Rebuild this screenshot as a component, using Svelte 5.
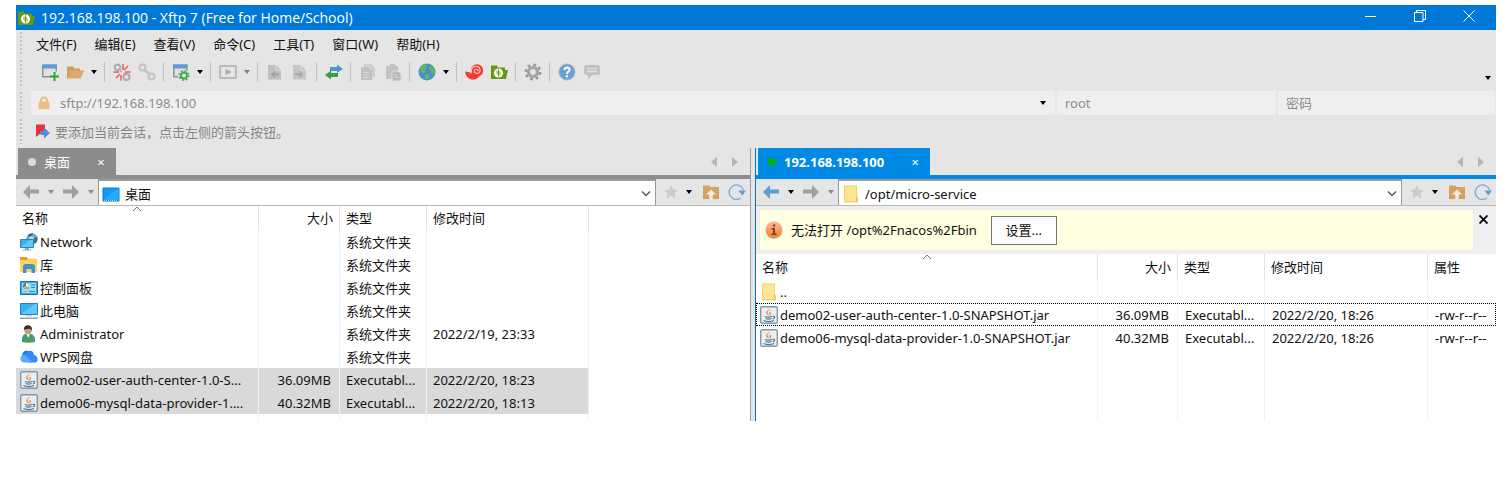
<script>
  const menus = ['文件(F)', '编辑(E)', '查看(V)', '命令(C)', '工具(T)', '窗口(W)', '帮助(H)'];

  const tools = [
    ['new', '新建会话'], ['open', '打开'], ['caret'], ['sep'],
    ['cut', '断开'], ['link', '重新连接'], ['sep'],
    ['props', '属性'], ['caret'], ['sep'],
    ['play', '运行'], ['caretOff'], ['sep'],
    ['pageLeft', '下载'], ['pageRight', '上传'], ['sep'],
    ['swap', '同步'], ['sep'],
    ['copy', '复制'], ['paste', '粘贴'], ['sep'],
    ['globe', '语言'], ['caret'], ['sep'],
    ['shell', 'Xshell'], ['xftp', 'Xftp'], ['sep'],
    ['gear', '选项'], ['sep'],
    ['help', '帮助'], ['chat', '反馈']
  ];

  const localRows = [
    { icon: 'network', name: 'Network', size: '', type: '系统文件夹', date: '' },
    { icon: 'library', name: '库', size: '', type: '系统文件夹', date: '' },
    { icon: 'control', name: '控制面板', size: '', type: '系统文件夹', date: '' },
    { icon: 'pc', name: '此电脑', size: '', type: '系统文件夹', date: '' },
    { icon: 'user', name: 'Administrator', size: '', type: '系统文件夹', date: '2022/2/19, 23:33' },
    { icon: 'cloud', name: 'WPS网盘', size: '', type: '系统文件夹', date: '' },
    { icon: 'jar', name: 'demo02-user-auth-center-1.0-S...', size: '36.09MB', type: 'Executabl...', date: '2022/2/20, 18:23', selected: true },
    { icon: 'jar', name: 'demo06-mysql-data-provider-1....', size: '40.32MB', type: 'Executabl...', date: '2022/2/20, 18:13', selected: true }
  ];

  const remoteRows = [
    { icon: 'folder', name: '..', size: '', type: '', date: '', attr: '' },
    { icon: 'jar', name: 'demo02-user-auth-center-1.0-SNAPSHOT.jar', size: '36.09MB', type: 'Executabl...', date: '2022/2/20, 18:26', attr: '-rw-r--r--', focused: true },
    { icon: 'jar', name: 'demo06-mysql-data-provider-1.0-SNAPSHOT.jar', size: '40.32MB', type: 'Executabl...', date: '2022/2/20, 18:26', attr: '-rw-r--r--' }
  ];
</script>

{#snippet caret(color)}
  <svg class="caret" width="6" height="4" viewBox="0 0 6 4" aria-hidden="true"><path d="M0 0h6L3 4z" fill={color} /></svg>
{/snippet}

{#snippet icon(name)}
  <svg class="icon" width="18" height="18" viewBox="0 0 18 18" fill="none" aria-hidden="true">
    {#if name === 'new'}
      <path d="M1.800 2.300h13.400v11.500H1.800z" fill="#e0e0e0" stroke="#929292" stroke-width="1.500" />
      <path d="M1 1.500h15v4H1z" fill="#5c9bd5" />
      <path d="M9 8.500h9V18H9z" fill="#e5e5e5" />
      <path d="M13.500 9v9M9 13.500h9" stroke="#27a627" stroke-width="2" />
    {:else if name === 'open'}
      <path d="M1 3.500h6l1.500 2H14V9H5l-3 6.500H1z" fill="#cda062" />
      <path d="M4.500 7.500H18L14.500 15.500H1.500z" fill="#dcaa69" />
    {:else if name === 'cut'}
      <circle cx="4.500" cy="4.200" r="2.800" stroke="#adadad" stroke-width="2" />
      <circle cx="13.500" cy="14" r="3" stroke="#adadad" stroke-width="2" />
      <path d="M6.500 6.500l2 2.500M10.500 10l1.500 2" stroke="#adadad" stroke-width="1.800" />
      <path d="M10 7V1M11 7l4-4M12 9h5.500M6 9H.5M7 11l-4 4M8 12v5.500" stroke="#ee5555" stroke-width="1.400" />
    {:else if name === 'link'}
      <circle cx="4.500" cy="4.500" r="3" stroke="#c3c3c3" stroke-width="2" />
      <circle cx="13.500" cy="13.500" r="3" stroke="#c3c3c3" stroke-width="2" />
      <path d="M6 6.500l6 5" stroke="#c3c3c3" stroke-width="2.600" />
    {:else if name === 'props'}
      <path d="M1.800 2.300h12.900v11.500H1.800z" fill="#e0e0e0" stroke="#929292" stroke-width="1.500" />
      <path d="M1 1.500h14.500v4H1z" fill="#5c9bd5" />
      <circle cx="12" cy="12.500" r="5.800" fill="#e5e5e5" />
      <circle cx="12" cy="12.500" r="4.500" stroke="#43ab43" stroke-width="2" stroke-dasharray="1.700 1.834" />
      <circle cx="12" cy="12.500" r="3" stroke="#43ab43" stroke-width="1.800" />
    {:else if name === 'play'}
      <rect x="1" y="3" width="16" height="12" rx="1" stroke="#b0b0b0" stroke-width="1.600" />
      <path d="M6.500 6l6 3-6 3z" fill="#acacac" />
    {:else if name === 'pageLeft'}
      <path d="M2 2h8l5 5v9.500H2z" fill="#c0c0c0" />
      <path d="M10 2v5h5" stroke="#dcdcdc" />
      <path d="M13 10H9V7.500L4.500 11.500 9 15v-2.500h4z" fill="#a6a6a6" />
    {:else if name === 'pageRight'}
      <path d="M2 2h8l5 5v9.500H2z" fill="#c6c6c6" />
      <path d="M10 2v5h5" stroke="#dcdcdc" />
      <path d="M4 10h4V7.500l4.500 4L8 15v-2.500H4z" fill="#a9a9a9" />
    {:else if name === 'swap'}
      <path d="M5 4h7V1.500l6 4.500-6 4V8H5z" fill="#5193d3" />
      <path d="M13 10H6V7.500L0 12l6 4.500V14h7z" fill="#39a03f" />
    {:else if name === 'copy'}
      <path d="M5 1h7l4 4v9H5z" fill="#cfcfcf" />
      <path d="M2 4h7l4 4v9H2z" fill="#c1c1c1" />
      <path d="M4 9.500h6M4 12h6M4 14.500h6" stroke="#d8d8d8" />
    {:else if name === 'paste'}
      <path d="M2 3h4V1h5v2h3v13H2z" fill="#c3c3c3" />
      <path d="M8 8h6l3 3v7H8z" fill="#bababa" stroke="#dedede" />
      <path d="M10 11.500h3M10 14h5" stroke="#d8d8d8" />
    {:else if name === 'globe'}
      <circle cx="9" cy="9" r="8.500" fill="#4e8fca" />
      <path d="M1.500 5.500C3 3 5.500 1.500 8 1.500L9 4 7 6v3l-2 2-1.500-2zM11.500 3l3 .5 2.500 4-.5 4-2.500-.500-1-3-2-2zM7 12l3-1 1.500 2-2 3.500L7.500 16z" fill="#58bb5e" />
    {:else if name === 'shell'}
      <path d="M0 8.500l5 .8c1 2 4 2.500 6 1l3.500 3.200c-5 5.500-13.500 3.500-14.500-5z" fill="#ee3e37" />
      <circle cx="12" cy="7.500" r="6.200" fill="#ee3e37" />
      <path d="M6.500 9.500c-1-4.500 2.500-7 6-6 3.500 1 3.500 6.500-.5 7-3.500 0-3.500-4.500-.5-4.500 1.500 0 2 1.500 1 2.200" stroke="#f8c5c1" stroke-width="1.100" />
    {:else if name === 'xftp'}
      <path d="M1 2.500h6l1 2h7V7h3l-2 9H1z" fill="#649a10" />
      <circle cx="8.500" cy="10" r="4.600" fill="#fff" />
      <path d="M7 7.500v3.200a1 1 0 0 0 1.500 0V6M10 12.500V9.300a1 1 0 0 0-1.500 0V14" stroke="#649a10" stroke-width=".9" />
    {:else if name === 'gear'}
      <circle cx="9" cy="9" r="7.200" stroke="#969696" stroke-width="2.400" stroke-dasharray="2.800 2.855" />
      <circle cx="9" cy="9" r="4.500" stroke="#a3a3a3" stroke-width="3.200" />
    {:else if name === 'help'}
      <circle cx="9" cy="9" r="8" fill="#69a0d6" stroke="#a3b6c9" />
      <path d="M6.500 7c0-3.500 5.200-3.200 5.200-.4C11.700 8.700 9 8.500 9 11" stroke="#fff" stroke-width="1.900" />
      <circle cx="9" cy="13.300" r="1.200" fill="#fff" />
    {:else if name === 'chat'}
      <path d="M3 2h12a2 2 0 0 1 2 2v6a2 2 0 0 1-2 2H9l-4 4.500V12H3a2 2 0 0 1-2-2V4a2 2 0 0 1 2-2z" fill="#c2c2c2" />
      <path d="M4 5.500h10M4 8.500h10" stroke="#dedede" stroke-width="1.300" />
    {:else if name === 'lock'}
      <path d="M6 9V6.500a3 3 0 0 1 6 0V9" stroke="#e8bf87" stroke-width="2" />
      <rect x="3.500" y="7.500" width="11" height="7.500" rx="1" fill="#eabf86" />
    {:else if name === 'flag'}
      <path d="M2 1.500h9V9l-4.500 1.500L2 14z" fill="#e03540" />
      <path d="M6.500 8H10V4.500l6 5.500-6 5.500V12H6.500z" fill="#4b8fd0" />
    {:else if name === 'back' || name === 'forward'}
      <path d={name === 'back' ? 'M1 9l7-7v4.500h9v4H8V16z' : 'M17 9l-7-7v4.500H1v4h9V16z'} fill="currentColor" />
    {:else if name === 'star'}
      <path d="M9 2l2.100 4.700 5 .5-3.800 3.300 1.200 5L9 12.800 4.500 15.500l1.200-5L2 7.200l5-.5z" fill="#cbcbcb" />
    {:else if name === 'up'}
      <path d="M1 2.500h6l2 1.500h8v12H1z" fill="#d4a263" />
      <path d="M9 6.500l5 5h-3.200V16H7.200v-4.500H4z" fill="#f2ece4" />
    {:else if name === 'refresh'}
      <path d="M13 15A7.300 7.300 0 1 1 15.500 7" stroke="#7aafdf" stroke-width="1.400" />
      <path d="M10.500 7.500H18l-3.700 5z" fill="#5c9fdb" />
    {:else if name === 'desktop'}
      <path d="M1 3h16v13H1z" fill="#159bf7" stroke="#087bcb" />
      <path d="M1.500 15L15 3.500h1.500V15z" fill="#27a9ff" />
      <path d="M2 15.500h14" stroke="#8cd3ff" stroke-dasharray="1 1" />
    {:else if name === 'folder'}
      <path d="M2 .5h13v11l1 1v5H2z" fill="#f3d26a" />
      <path d="M3 1.500h11V16H3z" fill="#fee596" />
      <path d="M14.500 12v5" stroke="#e9c352" />
    {:else if name === 'network'}
      <circle cx="12" cy="6" r="5.800" fill="#6fa6c4" />
      <path d="M8 2c1-1 3-2 5-1.500L12 3 9 4zM14 5l3-1c1 2 0 5-2 6.500L13.500 8z" fill="#336f93" />
      <path d="M9 4l3-1 2 2-.5 2H9z" fill="#b5dbe9" />
      <path d="M.5 6.500h13v8H.5z" fill="#3bb0f0" stroke="#2a83bd" />
      <path d="M1 14l9-7h3v7z" fill="#63c6f9" />
      <path d="M5 15h4v1.500h2v1H3v-1h2z" fill="#8ba7b8" />
    {:else if name === 'library'}
      <path d="M0 1h7l1 2h9v3H0z" fill="#dfa21a" />
      <path d="M0 4h7l1-1.500h9V16H0z" fill="#ffd25c" />
      <path d="M3 17V9.500l2-1.500h8l2 1.500V17h-3.500v-4h-5v4z" fill="#3f93d3" />
    {:else if name === 'control'}
      <path d="M.5 2.500h17v13H.5z" fill="#35a5e6" stroke="#1b78ae" />
      <path d="M2 4h14v10H2z" fill="#9cdaf8" />
      <circle cx="6" cy="7" r="3" fill="#2e82bd" />
      <path d="M6 7V4a3 3 0 0 1 2.500 4.500z" fill="#fff" />
      <path d="M6 7l2.500 1.500A3 3 0 0 1 3.200 8z" fill="#f2b52e" />
      <path d="M11 6h4M11 8.500h4M9 12.500h6" stroke="#2589c5" />
      <path d="M3 12.500h4" stroke="#f2a53a" />
    {:else if name === 'pc'}
      <path d="M.5 1.500h17v11H.5z" fill="#35b1f5" stroke="#2a81b4" />
      <path d="M1 12L15 2h2v10z" fill="#62c7fb" />
      <path d="M6 13h6v1.500H6z" fill="#c5d2da" />
      <path d="M0 15.500h18v1.500H0z" fill="#8ea4b1" />
    {:else if name === 'user'}
      <path d="M2 17c-.5-5 1-8.500 5-8.500h3c4 1 5.500 4 5 8.500-4 1-9 1-13 0z" fill="#4d9b73" />
      <path d="M6 8.500h4L8.500 13z" fill="#f3f4ee" />
      <circle cx="8" cy="5.500" r="3.600" fill="#c89b78" />
      <path d="M4 5C3.500 1 6.500 0 8.500.3c3 .3 4 3 3.200 5.700L10.500 3.800 6 4z" fill="#393027" />
    {:else if name === 'cloud'}
      <path d="M2 8C2 4 5 2 8 3l8 8-4 3.500H8z" fill="#1672ee" />
      <path d="M8 3c4-1 6 1.500 6 4 4 .5 5 6 1.500 7.500H13L5 6z" fill="#3488f8" />
      <path d="M5 6.500L13 14.500H4A4 4 0 0 1 2.500 7z" fill="#5aaaff" />
    {:else if name === 'jar'}
      <rect x=".7" y=".7" width="16.600" height="16.600" rx="1.500" fill="#e9eef2" stroke="#8299a9" stroke-width="1.400" />
      <path d="M9.500 2c1 2-3 3-2 5 .5 1 1.500 1 1 2.500C6 7.500 5.500 6.500 7 5s2.500-1.500 2.500-3zM12 4.500c-2 1-3 1.500-2.500 3 .5 1 .5 1.500-.5 2.500 3-1.500 2-2.500 1.500-3.500s.5-1.500 1.500-2z" fill="#e87a2a" />
      <path d="M5 10.500c2 .8 5 .8 7 0M5.500 12.500c2 .8 4 .8 6 0M3.500 14.500c3 1.500 8 1.300 10.500 0M12.500 10.500c3-.8 2.500 2 .3 2.500" stroke="#4f7590" stroke-width="1.200" />
    {/if}
  </svg>
{/snippet}

{#snippet pathBar(connected, iconName, path)}
  <div class="pathbar">
    <div class="nav">
      <button class="navbtn" class:on={connected} aria-label="后退">{@render icon('back')}</button>
      <button class="drop" aria-label="后退历史">{@render caret(connected ? '#000' : '#8c8c8c')}</button>
      <button class="navbtn" aria-label="前进">{@render icon('forward')}</button>
      <button class="drop" aria-label="前进历史">{@render caret('#8c8c8c')}</button>
    </div>
    <div class="location">
      {@render icon(iconName)}
      <select aria-label="路径"><option>{path}</option></select>
      <svg class="chevron" width="10" height="6" viewBox="0 0 10 6" fill="none" aria-hidden="true"><path d="M1 .5l4 4 4-4" stroke="#555" stroke-width="1.300" /></svg>
    </div>
    <div class="actions">
      <button class="act" aria-label="收藏">{@render icon('star')}</button>
      <button class="drop" aria-label="收藏列表">{@render caret('#000')}</button>
      <button class="act" aria-label="上级目录">{@render icon('up')}</button>
      <button class="act" aria-label="刷新">{@render icon('refresh')}</button>
    </div>
  </div>
{/snippet}

{#snippet scrollers()}
  <div class="scrollers">
    <button aria-label="向左滚动"><svg width="6" height="10" viewBox="0 0 6 10"><path d="M6 0v10L0 5z" fill="#b5b5b5" /></svg></button>
    <button aria-label="向右滚动"><svg width="6" height="10" viewBox="0 0 6 10"><path d="M0 0v10l6-5z" fill="#b5b5b5" /></svg></button>
  </div>
{/snippet}

{#snippet fileTable(rows, remote)}
  <table class:remote>
    <colgroup>
      <col class="c-name" /><col class="c-size" /><col class="c-type" /><col class="c-date" /><col />
    </colgroup>
    <thead>
      <tr>
        <th class="sorted">名称<svg width="10" height="6" viewBox="0 0 10 6" fill="none" aria-hidden="true"><path d="M1 5l4-4 4 4" stroke="#777" /></svg></th>
        <th class="num">大小</th>
        <th>类型</th>
        <th>修改时间</th>
        {#if remote}<th class="last">属性</th>{:else}<td class="last"></td>{/if}
      </tr>
    </thead>
    <tbody>
      {#each rows as row}
        <tr class:selected={row.selected} class:focused={row.focused}>
          <td class="name"><div>{@render icon(row.icon)}<span>{row.name}</span></div></td>
          <td class="num">{row.size}</td>
          <td>{row.type}</td>
          <td>{row.date}</td>
          <td class="last">{row.attr ?? ''}</td>
        </tr>
      {/each}
      <tr class="filler"><td></td><td></td><td></td><td></td><td class="last"></td></tr>
    </tbody>
  </table>
{/snippet}

<main>
  <header class="titlebar">
    {@render icon('xftp')}
    <h1>192.168.198.100 - Xftp 7 (Free for Home/School)</h1>
    <div class="controls">
      <button aria-label="最小化"><svg width="12" height="12" viewBox="0 0 12 12" stroke="#fff"><path d="M0 6.500h11" /></svg></button>
      <button aria-label="还原"><svg width="12" height="12" viewBox="0 0 12 12" stroke="#fff" fill="none"><path d="M.5 2.500h8.500v9H.5zM2.500 2.500v-2h9v9H9" /></svg></button>
      <button aria-label="关闭"><svg width="12" height="12" viewBox="0 0 12 12" stroke="#fff"><path d="M.5 .5l11 11M11.500 .5l-11 11" /></svg></button>
    </div>
  </header>

  <nav class="bar menubar">
    <i class="grip"></i>
    {#each menus as m}<button>{m}</button>{/each}
  </nav>

  <div class="bar toolbar">
    <i class="grip"></i>
    {#each tools as [kind, label]}
      {#if kind === 'sep'}
        <span class="sep"></span>
      {:else if kind === 'caret' || kind === 'caretOff'}
        <button class="tdrop" aria-label="更多">{@render caret(kind === 'caret' ? '#000' : '#808080')}</button>
      {:else}
        <button class="tool" aria-label={label}>{@render icon(kind)}</button>
      {/if}
    {/each}
    <button class="overflow" aria-label="工具栏选项">{@render caret('#000')}</button>
  </div>

  <div class="bar address">
    <i class="grip"></i>
    <div class="fields">
      <div class="field host">
        {@render icon('lock')}
        <input type="text" aria-label="主机地址" value="sftp://192.168.198.100" />
        <button class="drop" aria-label="地址历史">{@render caret('#000')}</button>
      </div>
      <input class="field" type="text" aria-label="用户名" value="root" />
      <input class="field" type="password" aria-label="密码" placeholder="密码" />
    </div>
  </div>

  <div class="bar hint">
    <i class="grip"></i>
    {@render icon('flag')}
    <span>要添加当前会话，点击左侧的箭头按钮。</span>
  </div>

  <div class="panes">
    <section class="pane local">
      <div class="tabs">
        <div class="tab"><i class="dot"></i><span>桌面</span><button aria-label="关闭标签">×</button></div>
        {@render scrollers()}
      </div>
      {@render pathBar(false, 'desktop', '桌面')}
      <div class="list">{@render fileTable(localRows, false)}</div>
    </section>

    <section class="pane host-pane">
      <div class="tabs">
        <div class="tab"><i class="dot"></i><span>192.168.198.100</span><button aria-label="关闭标签">×</button></div>
        {@render scrollers()}
      </div>
      {@render pathBar(true, 'folder', '/opt/micro-service')}
      <div class="notice">
        <div class="message">
          <svg width="18" height="18" viewBox="0 0 18 18" aria-hidden="true">
            <defs><linearGradient id="warn" x1="0" y1="0" x2="0" y2="1"><stop offset="0" stop-color="#fbb9a4" /><stop offset="1" stop-color="#ec8526" /></linearGradient></defs>
            <circle cx="9" cy="9.500" r="8.500" fill="#c9b9a0" />
            <circle cx="9" cy="8.700" r="8.300" fill="url(#warn)" />
            <path d="M6.500 7H10v5.500h1.500V14h-5v-1.500H8V8.500H6.500zM8 3.500h2.300v2H8z" fill="#8a3f1d" />
          </svg>
          <span>无法打开 /opt%2Fnacos%2Fbin</span>
          <button>设置...</button>
        </div>
        <button class="dismiss" aria-label="关闭提示"><svg width="9" height="9" viewBox="0 0 9 9" stroke="#000" stroke-width="1.800"><path d="M.5 .5l8 8M8.500 .5l-8 8" /></svg></button>
      </div>
      <div class="list">{@render fileTable(remoteRows, true)}</div>
    </section>
  </div>
</main>

<style>
  :global(body) { background: #fff; }
  main {
    margin: 5px 14px 0 16px;
    background: #e5e5e5;
    color: #111;
    font: 13px/20px "Noto Sans", "Noto Sans CJK SC", sans-serif;
  }
  main *, main *::before { box-sizing: border-box; }
  button, input, select {
    margin: 0;
    padding: 0;
    border: 0;
    border-radius: 0;
    background: none;
    color: inherit;
    font: inherit;
    outline: none;
  }
  svg { display: block; flex: none; }
  button { display: flex; align-items: center; justify-content: center; flex: none; }

  .titlebar { display: flex; align-items: center; height: 25px; padding: 0 3px 0 1px; background: #0078d7; color: #fff; }
  h1 { flex: 1; margin: 0 0 0 6px; font: 400 14px/20px "Open Sans", sans-serif; white-space: nowrap; overflow: hidden; }
  .controls { display: flex; height: 100%; }
  .controls button { width: 49px; height: 22px; }

  .bar { display: flex; align-items: center; }
  .grip {
    align-self: stretch;
    flex: none;
    width: 2px;
    margin: 2px 0 2px 4px;
    background: repeating-linear-gradient(#bdbdbd 0 2px, #f0f0f0 2px 3px, transparent 3px 4px);
  }
  .menubar { height: 28px; gap: 18px; }
  .menubar .grip { margin-right: -4px; }
  .toolbar { height: 32px; padding-bottom: 4px; }
  .toolbar .grip { margin: 2px 15px -2px 4px; }
  .tool { width: 25px; height: 25px; }
  .tdrop { width: 13px; height: 25px; }
  .sep { flex: none; width: 9px; height: 20px; background: linear-gradient(90deg, transparent 4px, #c2c2c2 4px 5px, transparent 5px); }
  .overflow { margin: 12px 5px 0 auto; }

  .address { height: 25px; padding-right: 1px; color: #8c8c8c; }
  .address .grip { margin-right: 9px; }
  .fields { display: grid; grid-template-columns: 1024fr 219fr 217fr; gap: 2px; flex: 1; }
  .field { min-width: 0; height: 24px; padding: 0 8px; background: #efefef; }
  .field::placeholder { color: #8c8c8c; opacity: 1; }
  .host { display: flex; align-items: center; padding: 0 4px; }
  .host input { flex: 1; min-width: 0; margin-left: 7px; }
  .drop { width: 16px; height: 20px; }

  .hint { height: 33px; color: #858585; }
  .hint .grip { margin: 4px 12px 4px 4px; }
  .hint span { margin-left: 3px; }

  .panes { display: grid; grid-template-columns: 735fr 741fr; column-gap: 4px; }
  .pane { display: flex; flex-direction: column; min-width: 0; --accent: #8c8c8c; }
  .local { border-right: 1px solid #a0a0a0; }
  .host-pane { --accent: #008ae6; border-left: 1px solid #0078b8; }
  .tabs { display: flex; justify-content: space-between; height: 31px; padding: 0 8px 0 2px; border-bottom: 4px solid var(--accent); }
  .tab { display: flex; align-items: center; height: 28px; padding: 0 10px; background: var(--accent); color: #fff; }
  .tab .dot { width: 8px; height: 8px; margin-right: 8px; border-radius: 50%; background: #dcdcdc; }
  .tab span { min-width: 26px; }
  .tab button { width: 10px; margin-left: 26px; line-height: 18px; }
  .host-pane .tab span { font-weight: 700; }
  .host-pane .tab .dot { background: #00b40a; }
  .scrollers { display: flex; gap: 7px; }
  .scrollers button { width: 14px; height: 27px; }

  .pathbar { display: flex; height: 27px; border-bottom: 1px solid #b8b8b8; }
  .nav { display: flex; align-items: center; width: 82px; padding-left: 5px; }
  .navbtn { width: 20px; color: #a0a0a0; }
  .navbtn.on { color: #5c9fd8; }
  .nav .drop { width: 20px; }
  .location {
    display: flex;
    align-items: center;
    flex: 1;
    min-width: 0;
    padding: 2px 4px 0 3px;
    border: 1px solid #9c9c9c;
    border-top-width: 2px;
    border-bottom: 0;
    background: #fff;
  }
  .location select { flex: 1; min-width: 0; height: 22px; margin-left: 5px; appearance: none; }
  .actions { display: flex; align-items: center; width: 94px; padding-left: 5px; }
  .act { width: 20px; }
  .drop + .act { margin-left: 4px; }
  .act + .act { margin-left: 6px; }

  .notice { display: flex; align-items: flex-start; height: 48px; padding: 4px 8px 4px 4px; background: #efefef; }
  .message { display: flex; align-items: center; flex: 1; height: 40px; padding-left: 5px; background: #ffffe1; white-space: nowrap; }
  .message span { margin: 0 14px 0 8px; }
  .message button { width: 66px; height: 29px; border: 1px solid #777; background: #fdfdfd; }
  .dismiss { width: 20px; height: 18px; margin-right: -5px; }

  .list { flex: 1; min-height: 0; background: #fff; overflow: hidden; }
  table { width: 100%; table-layout: fixed; border-collapse: separate; border-spacing: 0; }
  .c-name { width: 243px; }
  .c-size { width: 81px; }
  .c-type { width: 87px; }
  .c-date { width: 162px; }
  .remote .c-name { width: 342px; }
  .remote .c-size { width: 80px; }
  .remote .c-date { width: 163px; }
  th, td { padding: 0 0 0 6px; border-right: 1px solid #ecf3fa; text-align: left; white-space: nowrap; overflow: hidden; }
  th { position: relative; height: 24px; border-right-color: #e3e3e3; font-weight: 400; }
  .remote th { height: 26px; }
  td { height: 23px; }
  thead td { height: 24px; }
  th.num { padding-right: 6px; text-align: right; }
  td.num { padding-right: 8px; text-align: right; }
  .remote td { padding-left: 7px; }
  th.last, td.last { border-right: 0; }
  .sorted svg { position: absolute; top: 0; left: calc(50% - 5px); }
  td.name, .remote td.name { padding-left: 4px; }
  td.name div { display: flex; align-items: center; gap: 2px; }
  td.name span { line-height: 22px; }
  .selected td { background: #d9d9d9; }
  .selected td.last { background: none; }
  .focused { outline: 1px dotted #000; outline-offset: -1px; }
  .filler td { height: 7px; }
  .remote .filler td { height: 72px; }
</style>
